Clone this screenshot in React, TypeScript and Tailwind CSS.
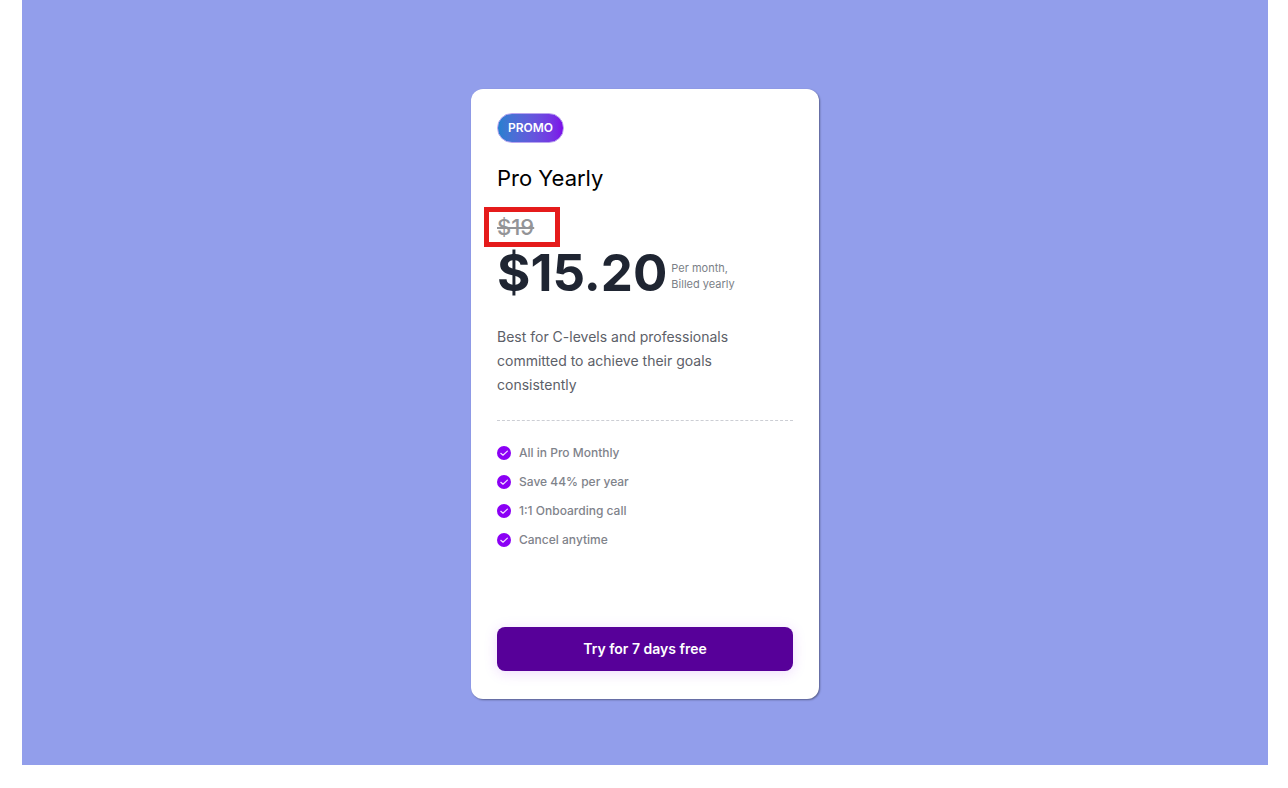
import { clsx } from "clsx";

const FEATURES = [
  "All in Pro Monthly",
  "Save 44% per year",
  "1:1 Onboarding call",
  "Cancel anytime",
];

const CheckBadge = () => (
  <svg viewBox="0 0 14 14" className="h-3.5 w-3.5 shrink-0" aria-hidden="true">
    <circle cx="7" cy="7" r="7" fill="#8b00f5" />
    <path d="M3.8 7.3 6 9.2 10.4 5.1" fill="none" stroke="#f3dcff" strokeWidth="1.2" strokeLinecap="round" strokeLinejoin="round" />
  </svg>
);

const PricingCard = () => (
  <article className={clsx("flex w-[348px] flex-col items-start rounded-xl bg-white px-[26px] pt-6 pb-7", "shadow-[1px_1px_2px_rgba(0,0,0,0.4)]")}>
    <span className="flex h-[30px] items-center rounded-full border border-[#b9a4f0] bg-linear-to-r from-[#2180cf] to-[#7d05e8] px-[10px] text-xs font-semibold text-white">PROMO</span>
    <h2 className="mt-[19px] text-[22px] leading-8 text-black">Pro Yearly</h2>
    <div className="-ml-[13px] mt-[13px] flex h-10 w-[76px] items-center border-[5px] border-[#e51b1b] pl-2">
      <s className="text-[22px] leading-7 font-medium text-[#939497]">$19</s>
    </div>
    <div className="flex items-center gap-1">
      <span className="text-[51px] leading-[52px] font-bold text-[#1f2532]">$15.20</span>
      <p className="mt-1.5 text-[11px] leading-4 text-[#7b7f87]">Per month,<br />Billed yearly</p>
    </div>
    <p className="mt-[26px] text-sm leading-6 text-[#5c6068]">
      Best for C-levels and professionals<br />committed to achieve their goals<br />consistently
    </p>
    <hr className="mt-[23px] w-full border-t border-dashed border-[#ccced4]" />
    <ul className="mt-[22px] flex flex-col gap-[9px]">
      {FEATURES.map((item) => (
        <li key={item} className="flex items-center gap-2 text-xs leading-5 font-medium text-[#7f838b]">
          <CheckBadge />
          {item}
        </li>
      ))}
    </ul>
    <button type="button" className="mt-[77px] h-11 w-full rounded-lg bg-[#570099] text-sm font-semibold text-white shadow-[0_2px_14px_rgba(139,0,245,0.15)]">Try for 7 days free</button>
  </article>
);

export default function App() {
  return (
    <div className="min-h-screen bg-white pr-5 pb-[23px] pl-[22px] font-[Inter,sans-serif]">
      <main className="flex min-h-[calc(100vh-23px)] items-start justify-center bg-[#929eeb] pt-[89px] pb-[66px]">
        <PricingCard />
      </main>
    </div>
  );
}
